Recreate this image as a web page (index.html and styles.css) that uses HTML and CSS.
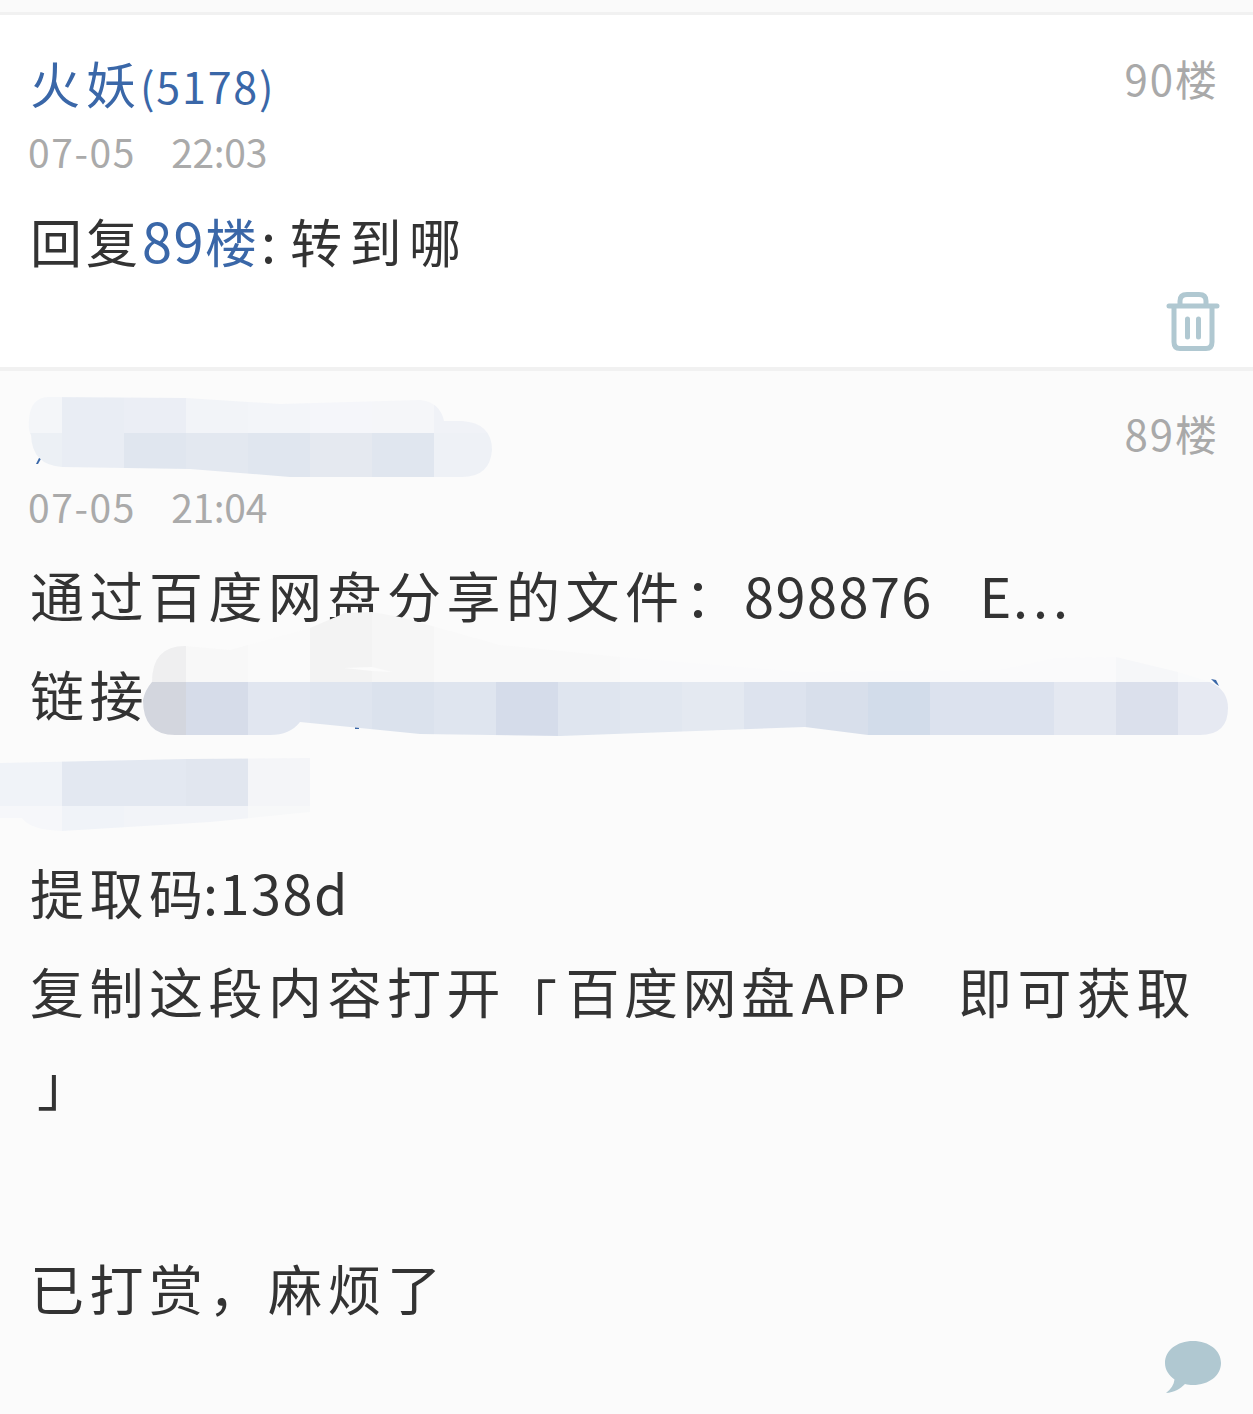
FILE: index.html
```html
<!DOCTYPE html>
<html lang="zh-CN">
<head>
    <meta charset="UTF-8">
    <title>回复列表</title>
    <link rel="stylesheet" href="styles.css">
</head>
<body>
    <div class="top-strip"></div>

    <div class="post post-white">
        <div class="post-head">
            <div>
                <div class="name">火妖<span class="level">(5178)</span></div>
                <div class="time"><span class="date">07-05</span><span class="clock">22:03</span></div>
            </div>
            <div class="floor">90楼</div>
        </div>
        <div class="content">
            <div class="line line-reply">回复<span class="link"><span class="latin">89</span>楼</span><span class="latin">: </span><span class="reply-text">转到哪</span></div>
        </div>
        <div class="post-foot">
            <svg class="icon-trash" width="54" height="60" viewBox="0 0 54 60">
                <path d="M3 14H51M14 13V9Q14 2.500 21 2.500H33Q40 2.500 40 9V13M8 14V50Q8 56.500 14 56.500H40Q46 56.500 46 50V14M21.500 27V45M32.500 27V45" fill="none" stroke="#b0c8d1" stroke-width="5" stroke-linecap="round"/>
            </svg>
        </div>
    </div>

    <div class="post post-grey">
        <div class="post-head">
            <div>
                <div class="name"></div>
                <div class="time"><span class="date">07-05</span><span class="clock">21:04</span></div>
            </div>
            <div class="floor">89楼</div>
        </div>
        <div class="content">
            <div class="line">通过百度网盘分享的文件：<span class="latin">898876&nbsp;&nbsp;&nbsp;<span class="ellipsis">E<span class="dots">...</span></span></span></div>
            <div class="line">链接</div>
            <div class="line">&nbsp;</div>
            <div class="line">提取<span class="no-gap">码</span><span class="latin">:138d</span></div>
            <div class="line">复制这段内容打开<span class="bracket-open">「</span><span class="tight">百度网盘</span><span class="latin app">APP&nbsp;&nbsp;&nbsp;</span>即可获取</div>
            <div class="line"><span class="bracket-close">」</span></div>
            <div class="line">&nbsp;</div>
            <div class="line">已打赏，麻烦了</div>
        </div>
        <svg class="icon-bubble" width="60" height="54" viewBox="0 0 60 54">
            <path d="M30 1C46 1 58 10.500 58 23C58 35.500 46 45 30 45C27 45 24.500 44.700 22 44C17 49 11 52.500 3 53C8 49 11 44.500 11.500 39.500C5.500 35 2 29.500 2 23C2 10.500 14 1 30 1Z" fill="#b0c8d1"/>
        </svg>
    </div>

    <!-- scribbled out parts of the screenshot -->
    <svg class="smear" width="1253" height="1414" viewBox="0 0 1253 1414">
        <defs>
            <clipPath id="smear-name">
                <path d="M48 397L186 398L280 404L420 400Q440 402 444 421L462 421Q492 423 492 450Q490 477 462 477L290 477L190 469L62 467Q32 465 31 435Q28 430 29 420Q30 398 48 397Z"/>
            </clipPath>
            <clipPath id="smear-link">
                <path d="M143 700Q145 690 152 682Q152 646 185 646L230 650L310 628L345 613L372 612L400 617L500 645L620 657L800 672L1000 670L1055 658L1116 657L1178 672L1210 682Q1228 690 1228 708Q1228 735 1200 735L868 735L805 727L560 736L420 734L300 722Q290 735 270 735L175 735Q143 735 143 700Z"/>
            </clipPath>
            <clipPath id="smear-link2">
                <path d="M0 763L186 759L310 758L310 812L210 822L62 831Q30 830 22 818L0 818Z"/>
            </clipPath>
        </defs>

        <path d="M36 464L40 456L42 457L38 464Z" fill="#3a67a8"/>
        <path d="M1211 679L1216 680L1219 686L1216 684Z" fill="#3a67a8"/>
        <rect x="355" y="727" width="4" height="2" fill="#3a67a8"/>

        <g clip-path="url(#smear-name)">
            <rect x="0" y="390" width="62" height="43" fill="#f4f6f9"/>
            <rect x="62" y="390" width="62" height="43" fill="#e9edf4"/>
            <rect x="124" y="390" width="62" height="43" fill="#ebeef5"/>
            <rect x="186" y="390" width="62" height="43" fill="#f2f4f8"/>
            <rect x="248" y="390" width="62" height="43" fill="#f3f5f9"/>
            <rect x="310" y="390" width="62" height="43" fill="#f5f6fa"/>
            <rect x="372" y="390" width="62" height="43" fill="#f5f6f9"/>
            <rect x="434" y="390" width="62" height="43" fill="#f0f2f7"/>
            <rect x="0" y="433" width="62" height="50" fill="#ecf0f5"/>
            <rect x="62" y="433" width="62" height="50" fill="#e9edf4"/>
            <rect x="124" y="433" width="62" height="50" fill="#e0e6ef"/>
            <rect x="186" y="433" width="62" height="50" fill="#e3e8f0"/>
            <rect x="248" y="433" width="62" height="50" fill="#e0e6ef"/>
            <rect x="310" y="433" width="62" height="50" fill="#e5e9f0"/>
            <rect x="372" y="433" width="62" height="50" fill="#e0e6ef"/>
            <rect x="434" y="433" width="62" height="50" fill="#eef1f6"/>
        </g>

        <g clip-path="url(#smear-link)">
            <rect x="124" y="605" width="62" height="77" fill="#efeff0"/>
            <rect x="186" y="605" width="62" height="77" fill="#f8f8f8"/>
            <rect x="248" y="605" width="62" height="77" fill="#fafafa"/>
            <rect x="310" y="605" width="62" height="77" fill="#f3f3f3"/>
            <rect x="372" y="605" width="62" height="77" fill="#f6f6f6"/>
            <rect x="434" y="605" width="186" height="77" fill="#f9f9f9"/>
            <rect x="620" y="605" width="496" height="77" fill="#fafafb"/>
            <rect x="1116" y="605" width="62" height="77" fill="#f6f7f9"/>
            <rect x="1178" y="605" width="62" height="77" fill="#f9fafb"/>
            <rect x="124" y="682" width="62" height="60" fill="#d3d6de"/>
            <rect x="186" y="682" width="62" height="60" fill="#d6dce9"/>
            <rect x="248" y="682" width="62" height="60" fill="#e1e6f0"/>
            <rect x="310" y="682" width="62" height="60" fill="#dfe5ef"/>
            <rect x="372" y="682" width="62" height="60" fill="#dbe2ed"/>
            <rect x="434" y="682" width="62" height="60" fill="#dfe5ef"/>
            <rect x="496" y="682" width="62" height="60" fill="#d5dcea"/>
            <rect x="558" y="682" width="62" height="60" fill="#dfe5ef"/>
            <rect x="620" y="682" width="62" height="60" fill="#e1e7f0"/>
            <rect x="682" y="682" width="62" height="60" fill="#e4e9f1"/>
            <rect x="744" y="682" width="62" height="60" fill="#dde3ee"/>
            <rect x="806" y="682" width="62" height="60" fill="#d8dfeb"/>
            <rect x="868" y="682" width="62" height="60" fill="#d2dcea"/>
            <rect x="930" y="682" width="124" height="60" fill="#dce2ee"/>
            <rect x="1054" y="682" width="62" height="60" fill="#e4e8f1"/>
            <rect x="1116" y="682" width="62" height="60" fill="#dbe0ec"/>
            <rect x="1178" y="682" width="62" height="60" fill="#e6e9f2"/>
            <path d="M344 668L372 667L392 672L372 671Z" fill="#fbfbfb"/>
        </g>

        <g clip-path="url(#smear-link2)">
            <rect x="0" y="750" width="62" height="56" fill="#f0f3f8"/>
            <rect x="62" y="750" width="124" height="56" fill="#e3e8f1"/>
            <rect x="186" y="750" width="62" height="56" fill="#e1e6ef"/>
            <rect x="248" y="750" width="62" height="56" fill="#f4f5f8"/>
            <rect x="0" y="806" width="62" height="30" fill="#f6f7fa"/>
            <rect x="62" y="806" width="62" height="30" fill="#f0f3f8"/>
            <rect x="124" y="806" width="124" height="30" fill="#f2f4f8"/>
            <rect x="248" y="806" width="62" height="30" fill="#f7f8f9"/>
        </g>
    </svg>
</body>
</html>
```

FILE: styles.css
```css
html, body {
    margin: 0;
    padding: 0;
}
body {
    position: relative;
    height: 1414px;
    overflow: hidden;
    background: #fbfbfb;
    color: #333;
    font-family: "Noto Sans CJK SC", "Noto Sans", sans-serif;
}
.top-strip {
    height: 12px;
    background: #fafafa;
}
.post {
    padding: 28px 34px 0 29px;
    border-top: 3px solid #f1f1f1;
}
.post-white {
    height: 324px;
    background: #fff;
}
.post-grey {
    position: relative;
    background: #fbfbfb;
    border-top-width: 4px;
    padding-top: 27px;
    height: 1016px;
}
.post-head {
    display: flex;
    justify-content: space-between;
    align-items: flex-start;
}
.name {
    height: 89px;
    margin-top: -5px;
    margin-left: 1px;
    font-size: 50px;
    line-height: 88px;
    color: #3a67a8;
    letter-spacing: 6px;
}
.level {
    font-size: 43px;
    letter-spacing: 1.8px;
    margin-left: -2px;
}
.time {
    font-size: 39px;
    line-height: 48px;
    color: #aaa;
    margin-left: -1px;
}
.date {
    letter-spacing: 1.6px;
}
.clock {
    margin-left: 35px;
    letter-spacing: -0.3px;
}
.floor {
    font-size: 42px;
    line-height: 70px;
    letter-spacing: 2px;
    color: #a9a9a9;
}
.content {
    margin-top: 15px;
    margin-left: 1px;
}
.line {
    font-size: 54px;
    line-height: 99px;
    letter-spacing: 5.5px;
    white-space: nowrap;
}
.line-reply {
    font-size: 52px;
    letter-spacing: 4px;
}
.reply-text {
    margin-left: -1px;
    letter-spacing: 7.5px;
}
.latin {
    font-size: 54px;
    letter-spacing: 1.5px;
}
.no-gap {
    letter-spacing: 0;
}
.ellipsis {
    margin-left: 6px;
}
.dots {
    letter-spacing: 5px;
}
.tight {
    letter-spacing: 4.5px;
}
.app {
    margin-left: 2px;
    margin-right: 10px;
}
.link {
    color: #3a67a8;
}
.bracket-open {
    line-height: 0;
    vertical-align: -12px;
    margin-left: -3px;
    margin-right: 3px;
}
.bracket-close {
    line-height: 0;
    vertical-align: 7px;
    margin-left: 7px;
}
.post-foot {
    display: flex;
    justify-content: flex-end;
    margin-top: 2px;
    margin-right: -1px;
}
.icon-trash {
    display: block;
}
.icon-bubble {
    position: absolute;
    left: 1163px;
    top: 969px;
}
.smear {
    position: absolute;
    top: 0;
    left: 0;
    pointer-events: none;
}
```
